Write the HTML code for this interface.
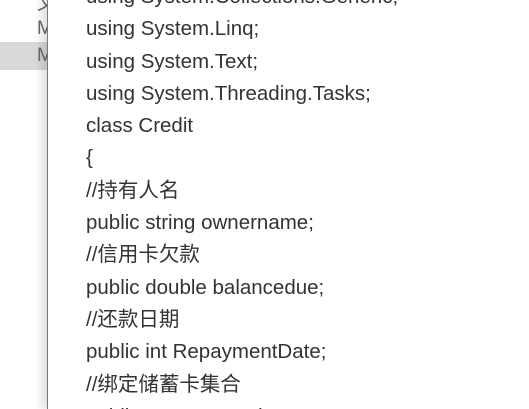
<!DOCTYPE html>
<html><head><meta charset="utf-8"><style>
html,body{margin:0;padding:0;width:529px;height:409px;overflow:hidden;background:#fff;}
.wrap{position:relative;width:529px;height:409px;overflow:hidden;}
.side{position:absolute;left:0;top:0;width:48px;height:409px;background:#fff;}
.sel{position:absolute;left:0;top:42px;width:48px;height:28px;background:#d9d9d9;}
.m{position:absolute;left:37px;font:19px "Liberation Sans",sans-serif;color:#666;}
.panel{position:absolute;left:47px;top:0;width:482px;height:409px;background:#fff;border-left:1px solid #777;box-shadow:-6px 0 8px rgba(0,0,0,0.12);}
.clip{position:absolute;left:86px;top:0;width:443px;height:409px;overflow:hidden;}
.code{position:absolute;left:0;top:-19px;font:20.5px "Liberation Sans","Noto Sans CJK SC",sans-serif;color:#333;line-height:32.3px;white-space:pre;}
</style></head><body><div class="wrap">
<div class="side"><div class="sel"></div>
<div class="m" style="top:-12px">文</div>
<div class="m" style="top:18px">M</div>
<div class="m" style="top:45px">M</div></div>
<div class="panel"></div>
<div class="clip"><div class="code">using System.Collections.Generic;
using System.Linq;
using System.Text;
using System.Threading.Tasks;
class Credit
{
//持有人名
public string ownername;
//信用卡欠款
public double balancedue;
//还款日期
public int RepaymentDate;
//绑定储蓄卡集合
public AccountCard A</div></div>
</div></body></html>
